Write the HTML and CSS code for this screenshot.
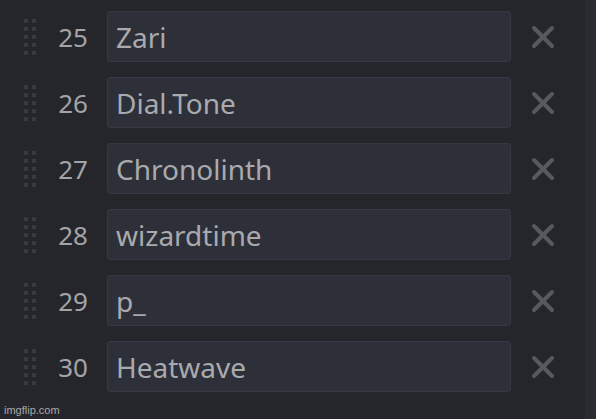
FILE: index.html
```html
<!DOCTYPE html>
<html>
<head>
<meta charset="utf-8">
<link rel="stylesheet" href="styles.css">
</head>
<body>
<div class="page">
  <div class="list">
    <div class="row">
      <svg class="handle" width="12" height="36" viewBox="0 0 12 36"><g fill="#393a40"><rect x="0" y="0" width="4" height="4"/><rect x="8" y="0" width="4" height="4"/><rect x="0" y="8" width="4" height="4"/><rect x="8" y="8" width="4" height="4"/><rect x="0" y="16" width="4" height="4"/><rect x="8" y="16" width="4" height="4"/><rect x="0" y="24" width="4" height="4"/><rect x="8" y="24" width="4" height="4"/><rect x="0" y="32" width="4" height="4"/><rect x="8" y="32" width="4" height="4"/></g></svg>
      <span class="num">25</span>
      <div class="field">Zari</div>
      <svg class="close" width="24" height="24" viewBox="0 0 24 24"><path d="M3 3L21 21M21 3L3 21" stroke="#58595e" stroke-width="4" stroke-linecap="round"/></svg>
    </div>
    <div class="row">
      <svg class="handle" width="12" height="36" viewBox="0 0 12 36"><g fill="#393a40"><rect x="0" y="0" width="4" height="4"/><rect x="8" y="0" width="4" height="4"/><rect x="0" y="8" width="4" height="4"/><rect x="8" y="8" width="4" height="4"/><rect x="0" y="16" width="4" height="4"/><rect x="8" y="16" width="4" height="4"/><rect x="0" y="24" width="4" height="4"/><rect x="8" y="24" width="4" height="4"/><rect x="0" y="32" width="4" height="4"/><rect x="8" y="32" width="4" height="4"/></g></svg>
      <span class="num">26</span>
      <div class="field">Dial.Tone</div>
      <svg class="close" width="24" height="24" viewBox="0 0 24 24"><path d="M3 3L21 21M21 3L3 21" stroke="#58595e" stroke-width="4" stroke-linecap="round"/></svg>
    </div>
    <div class="row">
      <svg class="handle" width="12" height="36" viewBox="0 0 12 36"><g fill="#393a40"><rect x="0" y="0" width="4" height="4"/><rect x="8" y="0" width="4" height="4"/><rect x="0" y="8" width="4" height="4"/><rect x="8" y="8" width="4" height="4"/><rect x="0" y="16" width="4" height="4"/><rect x="8" y="16" width="4" height="4"/><rect x="0" y="24" width="4" height="4"/><rect x="8" y="24" width="4" height="4"/><rect x="0" y="32" width="4" height="4"/><rect x="8" y="32" width="4" height="4"/></g></svg>
      <span class="num">27</span>
      <div class="field">Chronolinth</div>
      <svg class="close" width="24" height="24" viewBox="0 0 24 24"><path d="M3 3L21 21M21 3L3 21" stroke="#58595e" stroke-width="4" stroke-linecap="round"/></svg>
    </div>
    <div class="row">
      <svg class="handle" width="12" height="36" viewBox="0 0 12 36"><g fill="#393a40"><rect x="0" y="0" width="4" height="4"/><rect x="8" y="0" width="4" height="4"/><rect x="0" y="8" width="4" height="4"/><rect x="8" y="8" width="4" height="4"/><rect x="0" y="16" width="4" height="4"/><rect x="8" y="16" width="4" height="4"/><rect x="0" y="24" width="4" height="4"/><rect x="8" y="24" width="4" height="4"/><rect x="0" y="32" width="4" height="4"/><rect x="8" y="32" width="4" height="4"/></g></svg>
      <span class="num">28</span>
      <div class="field">wizardtime</div>
      <svg class="close" width="24" height="24" viewBox="0 0 24 24"><path d="M3 3L21 21M21 3L3 21" stroke="#58595e" stroke-width="4" stroke-linecap="round"/></svg>
    </div>
    <div class="row">
      <svg class="handle" width="12" height="36" viewBox="0 0 12 36"><g fill="#393a40"><rect x="0" y="0" width="4" height="4"/><rect x="8" y="0" width="4" height="4"/><rect x="0" y="8" width="4" height="4"/><rect x="8" y="8" width="4" height="4"/><rect x="0" y="16" width="4" height="4"/><rect x="8" y="16" width="4" height="4"/><rect x="0" y="24" width="4" height="4"/><rect x="8" y="24" width="4" height="4"/><rect x="0" y="32" width="4" height="4"/><rect x="8" y="32" width="4" height="4"/></g></svg>
      <span class="num">29</span>
      <div class="field">p_</div>
      <svg class="close" width="24" height="24" viewBox="0 0 24 24"><path d="M3 3L21 21M21 3L3 21" stroke="#58595e" stroke-width="4" stroke-linecap="round"/></svg>
    </div>
    <div class="row">
      <svg class="handle" width="12" height="36" viewBox="0 0 12 36"><g fill="#393a40"><rect x="0" y="0" width="4" height="4"/><rect x="8" y="0" width="4" height="4"/><rect x="0" y="8" width="4" height="4"/><rect x="8" y="8" width="4" height="4"/><rect x="0" y="16" width="4" height="4"/><rect x="8" y="16" width="4" height="4"/><rect x="0" y="24" width="4" height="4"/><rect x="8" y="24" width="4" height="4"/><rect x="0" y="32" width="4" height="4"/><rect x="8" y="32" width="4" height="4"/></g></svg>
      <span class="num">30</span>
      <div class="field">Heatwave</div>
      <svg class="close" width="24" height="24" viewBox="0 0 24 24"><path d="M3 3L21 21M21 3L3 21" stroke="#58595e" stroke-width="4" stroke-linecap="round"/></svg>
    </div>
  </div>
  <div class="strip"></div>
  <div class="watermark">imgflip.com</div>
</div>
</body>
</html>
```
FILE: styles.css
```css
html, body {
  margin: 0;
  padding: 0;
  background: #25262b;
}
.page {
  position: relative;
  display: flex;
  width: 596px;
  height: 419px;
  overflow: hidden;
}
.list {
  width: 585px;
  padding-top: 11px;
  display: flex;
  flex-direction: column;
  gap: 15px;
}
.strip {
  width: 11px;
  background: #2b2c32;
}
.row {
  display: flex;
  align-items: center;
  height: 51px;
  padding-left: 24px;
}
.handle {
  flex: none;
  display: block;
}
.num {
  width: 52px;
  text-align: right;
  font-family: "Noto Sans", sans-serif;
  font-size: 26px;
  color: #a3a4a8;
  margin-right: 19px;
}
.field {
  box-sizing: border-box;
  width: 404px;
  height: 51px;
  border: 1px solid #363843;
  border-radius: 3px;
  background: #2e3039;
  padding-left: 8px;
  display: flex;
  align-items: center;
  font-family: "Noto Sans", sans-serif;
  font-size: 28px;
  color: #a9aaae;
}
.close {
  flex: none;
  display: block;
  margin-left: 20px;
}
.watermark {
  position: absolute;
  left: 4px;
  bottom: 3px;
  font-family: "Liberation Sans", Arial, sans-serif;
  font-size: 11px;
  color: #a8a8ab;
}
```
